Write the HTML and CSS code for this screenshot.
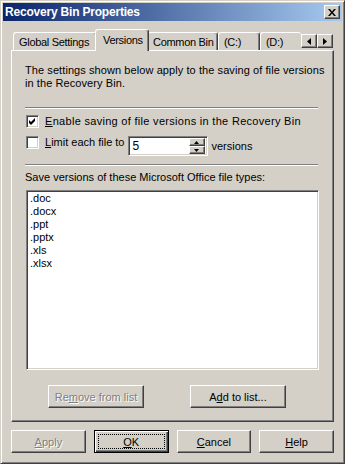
FILE: index.html
```html
<!doctype html>
<html lang="en">
  <head>
    <meta charset="UTF-8" />
    <meta name="viewport" content="width=device-width, initial-scale=1.0" />
    <title>Recovery Bin Properties</title>
    <link rel="stylesheet" href="styles.css">
  </head>
  <body>
    <div class="window">
      <div class="titlebar">
        <span class="title">Recovery Bin Properties</span>
        <button class="close-btn">
          <svg width="8" height="7" viewBox="0 0 8 7"><path d="M0 0h2l2 2.5L6 0h2L5 3.5 8 7H6L4 4.5 2 7H0l3-3.5z" fill="#000"/></svg>
        </button>
      </div>

      <div class="dialog">
        <div class="tabstrip">
          <div class="tab tab-global">Global Settings</div>
          <div class="tab tab-versions active">Versions</div>
          <div class="tab tab-common">Common Bin</div>
          <div class="tab tab-c">(C:)</div>
          <div class="tab tab-d">(D:)</div>
          <div class="tab-scroll">
            <span class="scroll-btn">
              <svg width="4" height="7" viewBox="0 0 4 7"><path d="M4 0v7L0 3.5z" fill="#000"/></svg>
            </span>
            <span class="scroll-btn">
              <svg width="4" height="7" viewBox="0 0 4 7"><path d="M0 0v7l4-3.5z" fill="#000"/></svg>
            </span>
          </div>
        </div>

        <div class="panel">
          <p class="intro">The settings shown below apply to the saving of file versions<br>in the Recovery Bin.</p>

          <div class="sep"></div>

          <div class="check-row">
            <span class="checkbox">
              <svg width="9" height="9" viewBox="0 0 9 9"><path d="M1 3l2 2 4-4v3L3 8 1 6z" fill="#000"/></svg>
            </span>
            <span class="check-label check-enable"><u>E</u>nable saving of file versions in the Recovery Bin</span>
          </div>

          <div class="limit-row">
            <span class="checkbox"></span>
            <span class="check-label"><u>L</u>imit each file to</span>
            <div class="spin">
              <span class="spin-value">5</span>
              <div class="spin-buttons">
                <span class="spin-btn">
                  <svg width="5" height="3" viewBox="0 0 5 3"><path d="M0 3h5L2.5 0z" fill="#000"/></svg>
                </span>
                <span class="spin-btn">
                  <svg width="5" height="3" viewBox="0 0 5 3"><path d="M0 0h5L2.5 3z" fill="#000"/></svg>
                </span>
              </div>
            </div>
            <span class="spin-suffix">versions</span>
          </div>

          <div class="sep sep-2"></div>

          <div class="list-label">Save versions of these Microsoft Office file types:</div>

          <ul class="listbox">
            <li>.doc</li>
            <li>.docx</li>
            <li>.ppt</li>
            <li>.pptx</li>
            <li>.xls</li>
            <li>.xlsx</li>
          </ul>

          <div class="list-buttons">
            <button class="btn btn-wide disabled">Re<u>m</u>ove from list</button>
            <button class="btn btn-wide">A<u>d</u>d to list...</button>
          </div>
        </div>

        <div class="dialog-buttons">
          <button class="btn disabled"><u>A</u>pply</button>
          <button class="btn default"><u>O</u>K</button>
          <button class="btn"><u>C</u>ancel</button>
          <button class="btn"><u>H</u>elp</button>
        </div>
      </div>
    </div>
  </body>
</html>
```

FILE: styles.css
```css
* {
  margin: 0;
  padding: 0;
  box-sizing: border-box;
}

body {
  font-family: 'Liberation Sans', Arial, sans-serif;
  font-size: 11px;
  color: #000;
  background: #d4d0c8;
}

.window {
  width: 345px;
  height: 464px;
  background: #d4d0c8;
  border: 1px solid;
  border-color: #d4d0c8 #404040 #404040 #d4d0c8;
  box-shadow: inset 1px 1px #fff, inset -1px -1px #808080;
  padding: 2px;
  display: flex;
  flex-direction: column;
}

/* title bar */

.titlebar {
  height: 18px;
  flex-shrink: 0;
  background: linear-gradient(to right, #0a246a, #a6caf0);
  display: flex;
  align-items: center;
  justify-content: space-between;
  padding: 0 2px;
}

.title {
  color: #fff;
  font-weight: bold;
  font-size: 12px;
  letter-spacing: -0.2px;
}

.close-btn {
  width: 16px;
  height: 14px;
  background: #d4d0c8;
  border: 1px solid;
  border-color: #fff #404040 #404040 #fff;
  box-shadow: inset -1px -1px #808080;
  display: flex;
  align-items: center;
  justify-content: center;
}

/* dialog body */

.dialog {
  flex: 1;
  padding: 8px;
  display: flex;
  flex-direction: column;
}

.tabstrip {
  height: 21px;
  flex-shrink: 0;
  display: flex;
  align-items: flex-end;
  padding-left: 2px;
}

.tab {
  height: 18px;
  background: #d4d0c8;
  border-left: 1px solid #fff;
  border-top: 1px solid #fff;
  border-right: 1px solid #404040;
  box-shadow: inset -1px 0 #808080;
  border-radius: 3px 3px 0 0;
  display: flex;
  align-items: center;
  padding-left: 5px;
  white-space: nowrap;
  overflow: hidden;
  letter-spacing: -0.3px;
}

.tab-global { width: 84px; }
.tab-common { width: 71px; }
.tab-c { width: 42px; }

.tab-d {
  width: 41px;
  border-right: none;
  box-shadow: none;
}

.tab.active {
  width: 54px;
  height: 22px;
  margin: 0 -2px -1px;
  padding-left: 7px;
  padding-bottom: 1px;
  position: relative;
  z-index: 2;
}

.tab-scroll {
  align-self: flex-start;
  margin-top: 5px;
  display: flex;
}

.scroll-btn {
  width: 16px;
  height: 14px;
  background: #d4d0c8;
  border: 1px solid;
  border-color: #fff #404040 #404040 #fff;
  box-shadow: inset -1px -1px #808080;
  display: flex;
  align-items: center;
  justify-content: center;
}

/* tab page */

.panel {
  height: 372px;
  flex-shrink: 0;
  border: 1px solid;
  border-color: #fff #404040 #404040 #fff;
  box-shadow: inset -1px -1px #808080;
  padding: 13px 14px 0 14px;
  display: flex;
  flex-direction: column;
}

.intro {
  line-height: 13px;
  white-space: nowrap;
  margin-left: -1px;
  letter-spacing: 0.08px;
}

.sep {
  margin: 17px 1px 0 -1px;
  border-top: 1px solid #808080;
  border-bottom: 1px solid #fff;
}

.sep-2 {
  margin-top: 8px;
}

.check-row {
  margin-top: 6px;
  height: 13px;
  display: flex;
  align-items: center;
}

.checkbox {
  width: 13px;
  height: 13px;
  flex-shrink: 0;
  background: #fff;
  border: 1px solid;
  border-color: #808080 #fff #fff #808080;
  box-shadow: inset 1px 1px #404040, inset -1px -1px #d4d0c8;
  display: flex;
  align-items: center;
  justify-content: center;
}

.check-label {
  margin-left: 6px;
  line-height: 13px;
  white-space: nowrap;
}

.check-enable {
  letter-spacing: 0.3px;
}

.limit-row {
  margin-top: 8px;
  height: 20px;
  display: flex;
  align-items: flex-start;
}

.spin {
  width: 80px;
  height: 20px;
  margin-left: 3px;
  background: #fff;
  border: 1px solid;
  border-color: #808080 #fff #fff #808080;
  box-shadow: inset 1px 1px #404040, inset -1px -1px #d4d0c8;
  padding: 2px 2px 2px 4px;
  display: flex;
  align-items: center;
  justify-content: space-between;
}

.spin-value {
  font-size: 12px;
}

.spin-buttons {
  width: 16px;
  height: 16px;
  display: flex;
  flex-direction: column;
}

.spin-btn {
  height: 8px;
  background: #d4d0c8;
  border: 1px solid;
  border-color: #fff #404040 #404040 #fff;
  box-shadow: inset -1px -1px #808080;
  display: flex;
  align-items: center;
  justify-content: center;
}

.spin-suffix {
  margin-left: 4px;
  align-self: center;
  line-height: 13px;
}

.list-label {
  margin-top: 5px;
  margin-left: -1px;
  line-height: 13px;
  white-space: nowrap;
}

.listbox {
  margin-top: 6px;
  height: 180px;
  list-style: none;
  background: #fff;
  border: 1px solid;
  border-color: #808080 #fff #fff #808080;
  box-shadow: inset 1px 1px #404040, inset -1px -1px #d4d0c8;
  padding: 1px 3px;
}

.listbox li {
  line-height: 13px;
}

.list-buttons {
  margin-top: 15px;
  padding-left: 22px;
  display: flex;
  gap: 46px;
}

/* buttons */

.btn {
  width: 75px;
  height: 23px;
  font-family: inherit;
  font-size: 11px;
  color: #000;
  background: #d4d0c8;
  border: 1px solid;
  border-color: #fff #404040 #404040 #fff;
  box-shadow: inset -1px -1px #808080;
  display: flex;
  align-items: center;
  justify-content: center;
}

.btn-wide {
  width: 96px;
}

.btn.disabled {
  color: #808080;
  text-shadow: 1px 1px #fff;
}

.btn.default {
  border-color: #000;
  box-shadow: inset 1px 1px #fff, inset -1px -1px #404040, inset -2px -2px #808080;
  outline: 1px dotted #000;
  outline-offset: -5px;
}

.dialog-buttons {
  margin-top: 8px;
  display: flex;
  justify-content: flex-end;
  gap: 8px;
}
```
